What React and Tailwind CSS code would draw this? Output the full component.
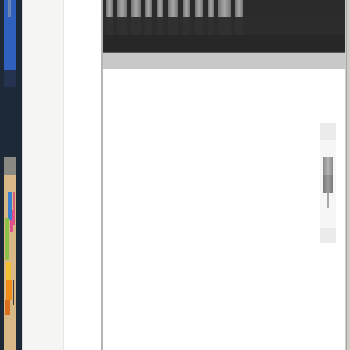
import React from "react";

const keys = [
  [106, 113], [117, 127], [131, 141], [145, 152], [157, 163], [168, 178],
  [183, 190], [195, 203], [208, 214], [218, 231], [235, 243],
];

function KeyRow({ top }) {
  let prev = 103;
  return (
    <div className="flex h-full">
      {keys.map(([a, b], i) => {
        const ml = a - prev;
        prev = b;
        return (
          <div
            key={i}
            style={{ marginLeft: ml, width: b - a }}
            className={
              top
                ? "h-full bg-gradient-to-r from-[#737373] via-[#a6a6a6] to-[#737373]"
                : "h-full bg-[#303030]"
            }
          />
        );
      })}
    </div>
  );
}

export default function App() {
  return (
    <div className="flex w-[350px] h-[350px] overflow-hidden bg-white font-['Liberation_Sans',sans-serif]">
      {/* dark sidebar */}
      <div className="w-[22px] shrink-0 bg-[#1e2937] pl-[4px] pr-[6px]">
        <div className="flex flex-col h-full w-[12px]">
          <div className="h-[70px] bg-[#2f60bd] flex">
            <div className="ml-[4px] w-[3px] h-[17px] bg-[#6d86b0]" />
          </div>
          <div className="h-[17px] bg-[#243250]" />
          <div className="h-[70px]" />
          <div className="h-[18px] bg-[#8a8882]" />
          <svg width="12" height="175" viewBox="0 0 12 175" className="block">
            <rect x="0" y="0" width="12" height="175" fill="#d7b886" />
            <rect x="4" y="17" width="4" height="28" fill="#3a7fd0" />
            <rect x="9" y="17" width="2" height="18" fill="#d8607a" />
            <rect x="8" y="35" width="3" height="15" fill="#e0508a" />
            <rect x="1" y="43" width="4" height="42" fill="#8cc048" />
            <rect x="6" y="45" width="3" height="12" fill="#e0508a" />
            <rect x="2" y="87" width="5" height="18" fill="#f0c030" />
            <rect x="2" y="105" width="6" height="20" fill="#f08c18" />
            <rect x="9" y="105" width="1" height="25" fill="#3a3a3a" />
            <rect x="1" y="125" width="5" height="15" fill="#d87020" />
          </svg>
        </div>
      </div>
      <div className="w-px shrink-0 bg-[#d8d8d6]" />
      <div className="w-[40px] shrink-0 bg-[#f5f5f3]" />
      <div className="w-px shrink-0 bg-[#e6e6e4]" />
      <div className="w-[37px] shrink-0 bg-white" />
      <div className="w-[2px] shrink-0 bg-[#b4b4b4]" />
      {/* main content */}
      <div className="flex-1 flex flex-col min-w-0">
        <div className="h-[17px] bg-[#2b2b2b]">
          <KeyRow top />
        </div>
        <div className="h-[18px] bg-[#2c2c2c]">
          <KeyRow />
        </div>
        <div className="h-[17px] bg-[#272727]" />
        <div className="h-px bg-[#5a5a5a]" />
        <div className="h-[16px] bg-[#c8c8c8]" />
        <div className="flex-1 bg-white flex justify-end pr-[9px] pt-[54px]">
          <div className="w-[16px] h-[120px] bg-[#ebebeb] flex flex-col">
            <div className="h-[17px]" />
            <div className="h-[88px] bg-[#f6f6f6] flex flex-col items-center pt-[17px]">
              <div className="w-[10px] h-[18px] bg-gradient-to-r from-[#8a8a8a] via-[#b4b4b4] to-[#8a8a8a]" />
              <div className="w-[10px] h-[18px] bg-gradient-to-r from-[#7a7a7a] via-[#9c9c9c] to-[#7a7a7a]" />
              <div className="w-[2px] h-[15px] bg-[#a8a8a8]" />
            </div>
          </div>
        </div>
      </div>
      <div className="w-[5px] shrink-0 flex">
        <div className="w-[1px] bg-[#d0cec9]" />
        <div className="w-[1px] bg-[#a8a6a2]" />
        <div className="flex-1 bg-[#cfccc7]" />
      </div>
    </div>
  );
}
